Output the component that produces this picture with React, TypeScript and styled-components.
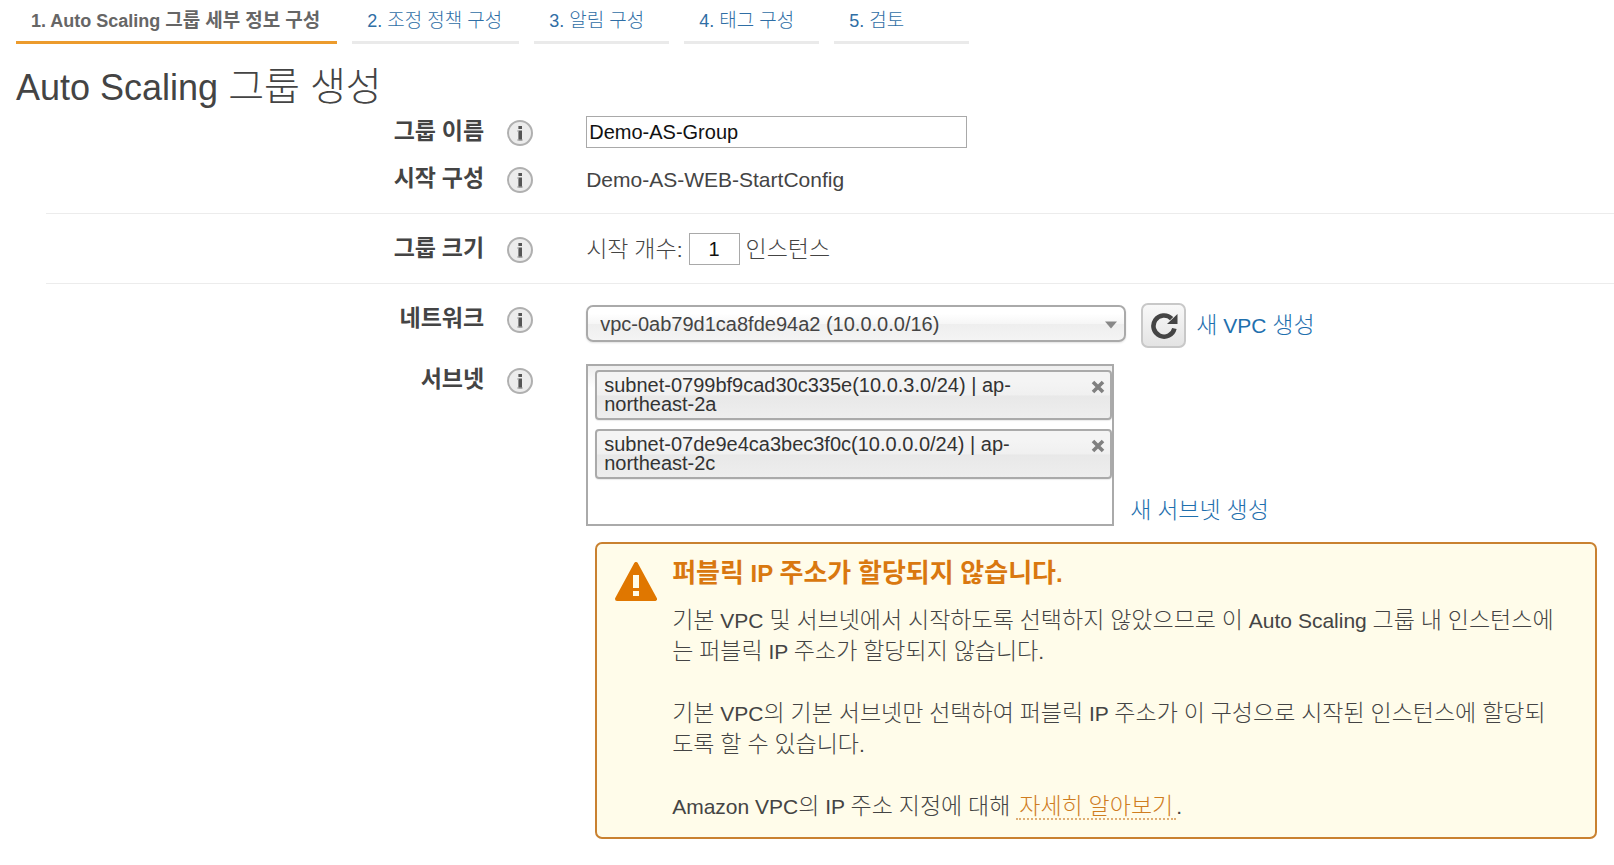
import React, { useState } from "react";
import styled, { createGlobalStyle, css } from "styled-components";

const GlobalStyle = createGlobalStyle`
  * { box-sizing: border-box; }
  body {
    margin: 0;
    background: #fff;
    color: #444;
    font-family: "Liberation Sans", "Noto Sans CJK KR", sans-serif;
    font-size: 21px;
    line-height: 31px;
    font-weight: 300;
  }
`;

const Page = styled.main`
  padding-bottom: 26px;
`;

const Steps = styled.nav`
  display: flex;
  gap: 15px;
  padding: 0 16px;
`;

const Step = styled.a<{ $active?: boolean }>`
  min-width: 135px;
  height: 44px;
  padding: 6px 17px 0 15px;
  border-bottom: 3px solid ${(p) => (p.$active ? "#ec9b2d" : "#eaeaea")};
  color: ${(p) => (p.$active ? "#666" : "#2f6ea5")};
  font-size: 18px;
  font-weight: ${(p) => (p.$active ? 700 : 300)};
  line-height: 30px;
  text-decoration: none;
  white-space: nowrap;
`;

const Title = styled.h1`
  margin: 0;
  padding: 22px 16px 6px;
  font-size: 36px;
  font-weight: 300;
  line-height: 44px;
`;

/* Hangul is set a little larger than the Latin text beside it. */
const HangulRun = styled.span<{ $size: number }>`
  font-size: ${(p) => p.$size}px;
  line-height: 1;
`;

const Mixed = ({ text, size = 23 }: { text: string; size?: number }) => (
  <>
    {text.split(/([가-힣]+)/).map((run, i) =>
      i % 2 ? <HangulRun key={i} $size={size}>{run}</HangulRun> : run
    )}
  </>
);

const Group = styled.section<{ $gap?: number }>`
  display: flex;
  flex-direction: column;
  gap: ${(p) => p.$gap ?? 15}px;
  padding-bottom: 18px;
`;

const Divider = styled.hr`
  margin: 0 0 19px 46px;
  border: 0;
  border-top: 1px solid #ececec;
`;

const Row = styled.div`
  display: grid;
  grid-template-columns: 30% 26px minmax(0, 1fr);
  column-gap: 23px;
  align-items: start;
`;

const labelText = css`
  color: #444;
  font-weight: 700;
  text-align: right;
`;

const Label = styled.label`
  ${labelText}
`;

const LabelText = styled.span`
  ${labelText}
`;

const InfoButton = styled.button`
  width: 26px;
  height: 26px;
  margin-top: 4px;
  padding: 0;
  border: 0;
  background: none;
  cursor: pointer;

  svg { display: block; }
`;

const Field = styled.div`
  display: flex;
  align-items: center;
  min-height: 32px;
  padding-left: 30px;
`;

const TextBox = styled.input`
  width: 381px;
  height: 32px;
  padding: 0 2px;
  border: 1px solid #a9a9a9;
  background: #fff;
  color: #111;
  font-family: inherit;
  font-size: 20px;
`;

const CountBox = styled(TextBox)`
  width: 51px;
  margin: 0 6px;
  text-align: center;
`;

const SelectFrame = styled.div`
  position: relative;
  flex: 0 1 540px;
  margin-bottom: 4px;

  svg {
    position: absolute;
    top: 16px;
    right: 9px;
    pointer-events: none;
  }
`;

const Select = styled.select`
  display: block;
  width: 100%;
  height: 37px;
  padding: 0 32px 0 12px;
  border: 2px solid #aaa;
  border-radius: 7px;
  appearance: none;
  background: linear-gradient(#fff 20%, #f6f6f6 50%, #eee 52%, #f4f4f4 100%);
  box-shadow: 0 1px 2px rgba(0, 0, 0, 0.12);
  color: #444;
  font-family: inherit;
  font-size: 20px;
`;

const RefreshButton = styled.button`
  display: flex;
  align-items: center;
  justify-content: center;
  width: 45px;
  height: 45px;
  margin: 0 10px 0 15px;
  padding: 0;
  border: 2px solid #c8c8c8;
  border-radius: 7px;
  background: linear-gradient(#f8f8f8, #e4e4e4);
  cursor: pointer;
`;

const Link = styled.a`
  color: #1f70ae;
  text-decoration: none;
`;

const SubnetField = styled(Field)`
  align-items: flex-end;
`;

const SubnetList = styled.ul`
  display: flex;
  flex: 0 1 528px;
  flex-direction: column;
  gap: 9px;
  min-height: 162px;
  margin: 0 16px 0 0;
  padding: 4px 0 4px 7px;
  border: 2px solid #aaa;
  background: linear-gradient(#eee, #fff 22px);
  list-style: none;
`;

const Subnet = styled.li`
  display: flex;
  align-items: flex-start;
  justify-content: space-between;
  min-height: 50px;
  padding: 4px 5px 4px 7px;
  border: 2px solid #aaa;
  border-radius: 4px;
  background: linear-gradient(#f4f4f4 20%, #f0f0f0 50%, #e8e8e8 52%, #eee 100%);
  box-shadow: 0 1px 1px rgba(0, 0, 0, 0.08);
  color: #333;
  font-size: 20px;
  line-height: 19px;
`;

const SubnetName = styled.span`
  max-width: 440px;
`;

const RemoveButton = styled.button`
  width: 14px;
  height: 14px;
  margin-top: 4px;
  padding: 0;
  border: 0;
  background: none;
  cursor: pointer;

  svg { display: block; }
`;

const Alert = styled.aside`
  display: grid;
  grid-template-columns: 42px minmax(0, 1fr);
  column-gap: 15px;
  margin: 0 17px 0 9px;
  padding: 14px 38px 15px 18px;
  border: 2px solid #c98130;
  border-radius: 7px;
  background: #fffcea;
`;

const AlertIcon = styled.svg`
  margin-top: 4px;
`;

const AlertTitle = styled.h2`
  margin: 0 0 15px;
  color: #d9780f;
  font-size: 24px;
  font-weight: 700;
  line-height: 32px;
`;

const AlertText = styled.p`
  margin: 0 0 31px;

  &:last-child { margin-bottom: 0; }
`;

const LearnMore = styled.a`
  padding: 0 3px;
  border-bottom: 2px dotted #dfae74;
  color: #cf7d1f;
  text-decoration: none;
`;

const Info = ({ about }: { about: string }) => (
  <InfoButton type="button" aria-label={about}>
    <svg width="26" height="26" viewBox="0 0 26 26">
      <circle cx="13" cy="13" r="12" fill="#ececec" stroke="#b0b0b0" strokeWidth="2" />
      <rect x="11.4" y="6" width="3.6" height="3" fill="#555" />
      <rect x="11.4" y="10.5" width="3.6" height="10" fill="#555" />
      <path d="M10 11h2M10 20h6" stroke="#aaa" strokeWidth="1" />
    </svg>
  </InfoButton>
);

const steps = [
  "1. Auto Scaling 그룹 세부 정보 구성",
  "2. 조정 정책 구성",
  "3. 알림 구성",
  "4. 태그 구성",
  "5. 검토",
];

const subnets = [
  "subnet-0799bf9cad30c335e(10.0.3.0/24) | ap-northeast-2a",
  "subnet-07de9e4ca3bec3f0c(10.0.0.0/24) | ap-northeast-2c",
];

export default function App() {
  const [name, setName] = useState("Demo-AS-Group");
  const [count, setCount] = useState("1");
  const [chosen, setChosen] = useState(subnets);

  return (
    <>
      <GlobalStyle />
      <Page>
        <Steps>
          {steps.map((step, i) => (
            <Step key={step} href="#" $active={i === 0}>
              <Mixed text={step} size={19} />
            </Step>
          ))}
        </Steps>
        <Title><Mixed text="Auto Scaling 그룹 생성" size={39} /></Title>

        <Group>
          <Row>
            <Label htmlFor="group-name"><Mixed text="그룹 이름" /></Label>
            <Info about="그룹 이름" />
            <Field>
              <TextBox id="group-name" value={name} onChange={(e) => setName(e.target.value)} />
            </Field>
          </Row>
          <Row>
            <LabelText><Mixed text="시작 구성" /></LabelText>
            <Info about="시작 구성" />
            <Field>Demo-AS-WEB-StartConfig</Field>
          </Row>
        </Group>

        <Divider />
        <Group>
          <Row>
            <Label htmlFor="group-size"><Mixed text="그룹 크기" /></Label>
            <Info about="그룹 크기" />
            <Field>
              <span><Mixed text="시작 개수:" /></span>
              <CountBox id="group-size" value={count} onChange={(e) => setCount(e.target.value)} />
              <span><Mixed text="인스턴스" /></span>
            </Field>
          </Row>
        </Group>

        <Divider />
        <Group $gap={16}>
          <Row>
            <Label htmlFor="network"><Mixed text="네트워크" /></Label>
            <Info about="네트워크" />
            <Field>
              <SelectFrame>
                <Select id="network">
                  <option>vpc-0ab79d1ca8fde94a2 (10.0.0.0/16)</option>
                </Select>
                <svg width="12" height="8" viewBox="0 0 12 8"><path d="M0 0.5h12L6 7.5z" fill="#888" /></svg>
              </SelectFrame>
              <RefreshButton type="button" aria-label="새로 고침">
                <svg width="28" height="28" viewBox="0 0 28 28">
                  <path d="M24.4 16.4A10.6 10.6 0 1 1 21.6 6.6" fill="none" stroke="#444" strokeWidth="4.6" />
                  <path d="M27.5 2V12H17z" fill="#444" />
                </svg>
              </RefreshButton>
              <Link href="#"><Mixed text="새 VPC 생성" /></Link>
            </Field>
          </Row>
          <Row>
            <LabelText id="subnet-label"><Mixed text="서브넷" /></LabelText>
            <Info about="서브넷" />
            <SubnetField>
              <SubnetList aria-labelledby="subnet-label">
                {chosen.map((subnet) => (
                  <Subnet key={subnet}>
                    <SubnetName>{subnet}</SubnetName>
                    <RemoveButton
                      type="button"
                      aria-label="제거"
                      onClick={() => setChosen(chosen.filter((s) => s !== subnet))}
                    >
                      <svg width="14" height="14" viewBox="0 0 14 14">
                        <path d="M2 2l10 10M12 2L2 12" stroke="#808080" strokeWidth="3.6" />
                      </svg>
                    </RemoveButton>
                  </Subnet>
                ))}
              </SubnetList>
              <Link href="#"><Mixed text="새 서브넷 생성" /></Link>
            </SubnetField>
          </Row>
          <Row>
            <span />
            <span />
            <Field>
              <Alert>
                <AlertIcon width="42" height="40" viewBox="0 0 42 40" aria-hidden="true">
                  <path d="M21 2L40 37H2z" fill="#e07700" stroke="#e07700" strokeWidth="4" strokeLinejoin="round" />
                  <path d="M18 13h6v13h-6zM18 29h6v5h-6z" fill="#fffcea" />
                </AlertIcon>
                <div>
                  <AlertTitle><Mixed text="퍼블릭 IP 주소가 할당되지 않습니다." size={26} /></AlertTitle>
                  <AlertText>
                    <Mixed text="기본 VPC 및 서브넷에서 시작하도록 선택하지 않았으므로 이 Auto Scaling 그룹 내 인스턴스에는 퍼블릭 IP 주소가 할당되지 않습니다." />
                  </AlertText>
                  <AlertText>
                    <Mixed text="기본 VPC의 기본 서브넷만 선택하여 퍼블릭 IP 주소가 이 구성으로 시작된 인스턴스에 할당되도록 할 수 있습니다." />
                  </AlertText>
                  <AlertText>
                    <Mixed text="Amazon VPC의 IP 주소 지정에 대해 " />
                    <LearnMore href="#"><Mixed text="자세히 알아보기" /></LearnMore>.
                  </AlertText>
                </div>
              </Alert>
            </Field>
          </Row>
        </Group>
      </Page>
    </>
  );
}
